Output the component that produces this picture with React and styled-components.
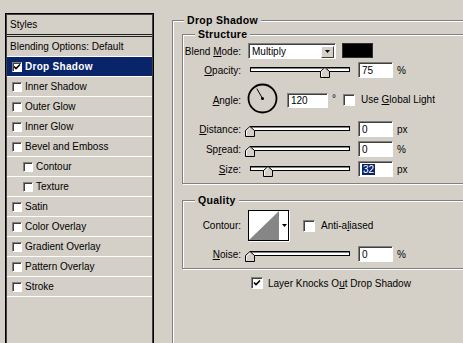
import React from "react";
import styled, { createGlobalStyle } from "styled-components";

const GlobalStyle = createGlobalStyle`
  html, body { margin: 0; padding: 0; background: #d4d0c8; }
  body {
    font-family: "Liberation Sans", Arial, sans-serif;
    font-size: 10px;
    color: #000;
  }
`;

const Dialog = styled.div`
  width: 463px;
  height: 343px;
  box-sizing: border-box;
  overflow: hidden;
  background: #d4d0c8;
  display: flex;
  align-items: flex-start;
  padding: 13px 0 0 5px;
`;

/* ---------- left styles list ---------- */

const StylesPanel = styled.div`
  width: 149px;
  height: 345px;
  flex-shrink: 0;
  box-sizing: border-box;
  border: 1px solid #000;
  box-shadow: inset 1px 1px 0 #404040, inset -1px -1px 0 #404040;
  padding: 1px;
`;

const PanelHeader = styled.div`
  height: 19px;
  line-height: 19px;
  padding-left: 3px;
  border-bottom: 3px double #202020;
`;

const StyleRow = styled.div`
  display: flex;
  align-items: center;
  gap: 3px;
  height: 19px;
  border-bottom: 1px solid #fff;
  padding-left: ${(p) => (p.$plain ? 3 : p.$indent ? 16 : 5)}px;
  background: ${(p) => (p.$active ? "#0a246a" : "transparent")};
  color: ${(p) => (p.$active ? "#fff" : "#000")};
  font-weight: ${(p) => (p.$active ? "bold" : "normal")};
  letter-spacing: ${(p) => (p.$active ? "0.3px" : "0")};
`;

const Box = styled.span`
  display: inline-flex;
  align-items: center;
  justify-content: center;
  flex-shrink: 0;
  box-sizing: border-box;
  width: ${(p) => p.$size || 10}px;
  height: ${(p) => p.$size || 10}px;
  background: #fff;
  border: 1px solid;
  border-color: #808080 #fff #fff #808080;
  box-shadow: inset 1px 1px 0 #404040;
`;

const Check = ({ checked, size }) => (
  <Box $size={size}>
    {checked && (
      <svg width="8" height="8" viewBox="0 0 8 8">
        <path d="M1 3.5 L3 5.5 L7 1.5" fill="none" stroke="#000" strokeWidth="1.6" />
      </svg>
    )}
  </Box>
);

/* ---------- right settings ---------- */

const Settings = styled.div`
  margin-left: 18px;
  flex-shrink: 0;
`;

const Group = styled.fieldset`
  margin: ${(p) => p.$mt || 0}px 0 0 ${(p) => p.$ml || 0}px;
  padding: ${(p) => p.$pt || 0}px 0 ${(p) => p.$pb || 0}px 0;
  width: ${(p) => p.$w}px;
  min-width: 0;
  min-height: ${(p) => p.$minh || 0}px;
  box-sizing: border-box;
  border: 1px solid #808080;
  box-shadow: inset 1px 1px 0 #fff, 1px 1px 0 #fff;
`;

const GroupTitle = styled.legend`
  margin-left: ${(p) => p.$ml || 11}px;
  padding: 0 3px;
  font-weight: bold;
  font-size: 10.5px;
  letter-spacing: 0.3px;
  line-height: 14px;
  background: #d4d0c8;
`;

const FieldRow = styled.div`
  display: flex;
  align-items: center;
  height: ${(p) => p.$h || 16}px;
  margin-top: ${(p) => p.$mt || 0}px;
`;

const FieldLabel = styled.span`
  width: 58px;
  flex-shrink: 0;
  margin-right: 7px;
  margin-top: ${(p) => p.$dy || 0}px;
  text-align: right;
`;

const Select = styled.div`
  width: 88px;
  height: 16px;
  box-sizing: border-box;
  display: flex;
  align-items: center;
  justify-content: space-between;
  background: #fff;
  border: 1px solid;
  border-color: #808080 #fff #fff #808080;
  box-shadow: inset 1px 1px 0 #404040;
  padding: 1px 1px 0 3px;
`;

const DropButton = styled.span`
  width: 13px;
  height: 12px;
  box-sizing: border-box;
  display: flex;
  align-items: center;
  justify-content: center;
  background: #d4d0c8;
  border: 1px solid;
  border-color: #fff #404040 #404040 #fff;
`;

const Arrow = () => (
  <svg width="5" height="3" viewBox="0 0 5 3">
    <path d="M0 0 H5 L2.5 3 Z" fill="#000" />
  </svg>
);

const Swatch = styled.span`
  width: 31px;
  height: 15px;
  margin-left: 6px;
  margin-top: -1px;
  background: #000;
  border: 1px solid #303030;
  box-sizing: border-box;
`;

const SliderBox = styled.div`
  position: relative;
  width: 100px;
  height: 16px;
  margin-left: 2px;
  flex-shrink: 0;
`;

const Track = styled.div`
  margin-top: 5px;
  height: 5px;
  box-sizing: border-box;
  background: #fff;
  border: 1px solid #000;
  box-shadow: inset 0 1px 0 #808080;
`;

const Thumb = styled.svg`
  position: absolute;
  top: 5px;
`;

const Slider = ({ value }) => (
  <SliderBox>
    <Track />
    <Thumb width="10" height="11" viewBox="0 0 10 11" style={{ left: value - 5 }}>
      <path d="M0.5 10.5 V4.5 L5 0.5 L9.5 4.5 V10.5 Z" fill="#d4d0c8" stroke="#000" />
      <path d="M1.5 9.5 V5 L5 1.8" fill="none" stroke="#fff" />
    </Thumb>
  </SliderBox>
);

const Input = styled.span`
  width: ${(p) => p.$w || 35}px;
  height: ${(p) => p.$h || 16}px;
  margin-left: ${(p) => p.$ml || 8}px;
  margin-top: ${(p) => p.$dy || 0}px;
  box-sizing: border-box;
  display: flex;
  align-items: center;
  background: #fff;
  border: 1px solid;
  border-color: #808080 #fff #fff #808080;
  box-shadow: inset 1px 1px 0 #404040;
  padding-left: 3px;
`;

const Selected = styled.span`
  background: #0a246a;
  color: #fff;
  padding: 0 1px;
`;

const Unit = styled.span`
  margin-left: ${(p) => p.$ml || 4}px;
  align-self: ${(p) => (p.$top ? "flex-start" : "center")};
  margin-top: ${(p) => (p.$top ? 10 : 0)}px;
`;

const CheckLabel = styled.label`
  display: flex;
  align-items: center;
  gap: ${(p) => p.$gap || 6}px;
  margin-left: ${(p) => p.$ml || 0}px;
  margin-top: ${(p) => p.$dy || 0}px;
`;

const Dial = () => (
  <svg width="31" height="31" viewBox="0 0 31 31" style={{ marginLeft: -1 }}>
    <circle cx="15.5" cy="15.5" r="14" fill="none" stroke="#000" strokeWidth="1.8" />
    <line x1="15.5" y1="15.5" x2="9.8" y2="5.6" stroke="#000" strokeWidth="1" />
    <circle cx="15.5" cy="15.5" r="1.5" fill="#000" />
  </svg>
);

const ContourPicker = styled.div`
  width: 41px;
  height: 31px;
  box-sizing: border-box;
  display: flex;
  background: #fff;
  border: 1px solid #000;
  box-shadow: 1px 1px 0 #fff;
`;

const ContourArrow = styled.span`
  flex: 1;
  display: flex;
  justify-content: center;
  padding-top: 13px;
  border-left: 1px solid #fff;
`;

const KnockRow = styled.div`
  padding-left: 78px;
  margin-top: 8px;
`;

const styleItems = [
  { name: "Inner Shadow" },
  { name: "Outer Glow" },
  { name: "Inner Glow" },
  { name: "Bevel and Emboss" },
  { name: "Contour", indent: true },
  { name: "Texture", indent: true },
  { name: "Satin" },
  { name: "Color Overlay" },
  { name: "Gradient Overlay" },
  { name: "Pattern Overlay" },
  { name: "Stroke" },
];

export default function App() {
  return (
    <>
      <GlobalStyle />
      <Dialog>
        <StylesPanel>
          <PanelHeader>Styles</PanelHeader>
          <StyleRow $plain>Blending Options: Default</StyleRow>
          <StyleRow $active>
            <Check checked />
            Drop Shadow
          </StyleRow>
          {styleItems.map((s) => (
            <StyleRow key={s.name} $indent={s.indent}>
              <Check />
              {s.name}
            </StyleRow>
          ))}
        </StylesPanel>

        <Settings>
          <Group $w={300} $minh={340}>
            <GroupTitle>Drop Shadow</GroupTitle>

            <Group $w={300} $ml={9} $pt={2} $pb={6}>
              <GroupTitle $ml={12}>Structure</GroupTitle>
              <FieldRow>
                <FieldLabel>Blend <u>M</u>ode:</FieldLabel>
                <Select>
                  Multiply
                  <DropButton>
                    <Arrow />
                  </DropButton>
                </Select>
                <Swatch />
              </FieldRow>
              <FieldRow $mt={3}>
                <FieldLabel><u>O</u>pacity:</FieldLabel>
                <Slider value={75} />
                <Input>75</Input>
                <Unit>%</Unit>
              </FieldRow>
              <FieldRow $h={30} $mt={5}>
                <FieldLabel $dy={5}><u>A</u>ngle:</FieldLabel>
                <Dial />
                <Input $w={41} $h={15} $ml={9} $dy={5}>120</Input>
                <Unit $top>°</Unit>
                <CheckLabel $ml={7} $dy={3}>
                  <Check size={12} />
                  <span>Use <u>G</u>lobal Light</span>
                </CheckLabel>
              </FieldRow>
              <FieldRow $mt={8}>
                <FieldLabel><u>D</u>istance:</FieldLabel>
                <Slider value={0} />
                <Input>0</Input>
                <Unit>px</Unit>
              </FieldRow>
              <FieldRow $mt={4}>
                <FieldLabel>Sp<u>r</u>ead:</FieldLabel>
                <Slider value={0} />
                <Input>0</Input>
                <Unit>%</Unit>
              </FieldRow>
              <FieldRow $mt={4}>
                <FieldLabel><u>S</u>ize:</FieldLabel>
                <Slider value={18} />
                <Input><Selected>32</Selected></Input>
                <Unit>px</Unit>
              </FieldRow>
            </Group>

            <Group $w={300} $ml={9} $mt={9} $pt={3} $pb={6}>
              <GroupTitle $ml={12}>Quality</GroupTitle>
              <FieldRow $h={31}>
                <FieldLabel>Contour:</FieldLabel>
                <ContourPicker>
                  <svg width="30" height="29" viewBox="0 0 30 29">
                    <path d="M0 29 L30 0 V29 Z" fill="#868686" />
                  </svg>
                  <ContourArrow>
                    <svg width="5" height="3" viewBox="0 0 5 3">
                      <path d="M0 0 H5 L2.5 3 Z" fill="#000" />
                    </svg>
                  </ContourArrow>
                </ContourPicker>
                <CheckLabel $ml={14}>
                  <Check size={12} />
                  <span>Anti-a<u>l</u>iased</span>
                </CheckLabel>
              </FieldRow>
              <FieldRow $mt={5}>
                <FieldLabel><u>N</u>oise:</FieldLabel>
                <Slider value={0} />
                <Input>0</Input>
                <Unit>%</Unit>
              </FieldRow>
            </Group>

            <KnockRow>
              <CheckLabel $gap={5}>
                <Check checked size={12} />
                <span>Layer Knocks O<u>u</u>t Drop Shadow</span>
              </CheckLabel>
            </KnockRow>
          </Group>
        </Settings>
      </Dialog>
    </>
  );
}
